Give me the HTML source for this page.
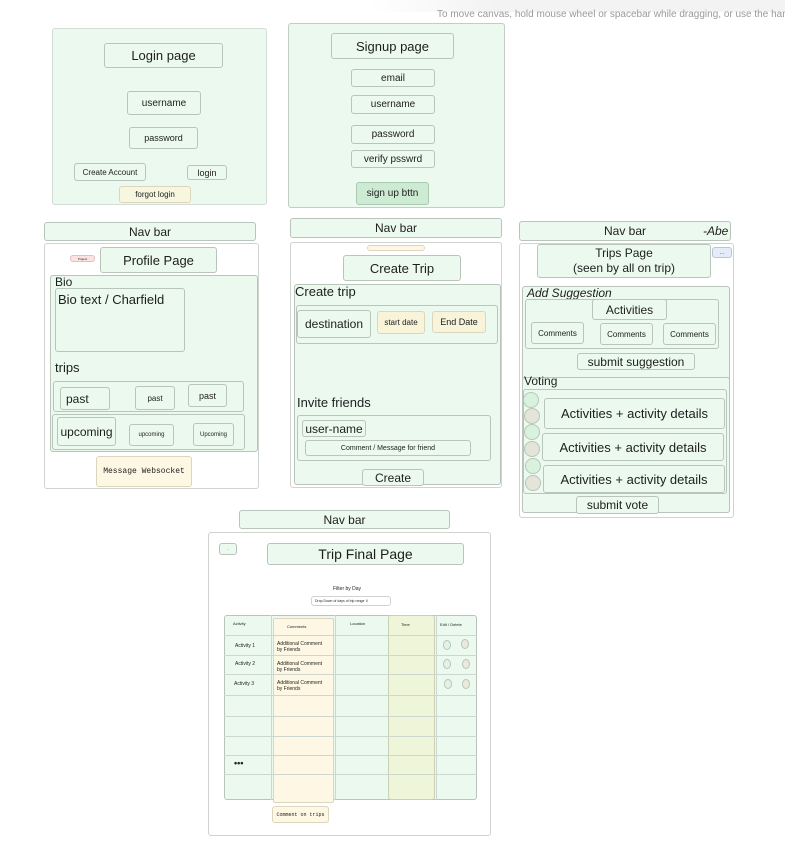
<!DOCTYPE html>
<html><head><meta charset="utf-8"><style>
*{margin:0;padding:0;box-sizing:border-box}
body{width:785px;height:863px;background:#fff;position:relative;overflow:hidden;font-family:"Liberation Sans",sans-serif;color:#1e1e1e}
.b{position:absolute;border:1px solid #b9c4bb;border-radius:3px;background:#ebf9ee;display:flex;align-items:center;justify-content:center;text-align:center;white-space:nowrap}
.w{background:#fff;border-color:#cfd4d0}
.y{background:#fdf7e3;border-color:#dcd6bf}
.t{position:absolute;white-space:nowrap}
.c{position:absolute;border-radius:50%;border:1px solid #b9c4bb}
.hl{position:absolute;height:1px;background:#cdd6cf}
</style></head><body>
<div style="position:absolute;left:370px;top:0;width:415px;height:12px;background:linear-gradient(90deg,#fff,#f3f3f3 30%)"></div>
<div class="t" style="left:437px;top:9px;font-size:10px;color:#9a9a9a">To move canvas, hold mouse wheel or spacebar while dragging, or use the hand</div>

<!-- Login -->
<div class="b" style="left:52px;top:28px;width:215px;height:177px;border-color:#d3dcd5"></div>
<div class="b" style="left:104px;top:43px;width:119px;height:25px;font-size:13px">Login page</div>
<div class="b" style="left:127px;top:91px;width:74px;height:24px;font-size:10px">username</div>
<div class="b" style="left:129px;top:127px;width:69px;height:22px;font-size:9px">password</div>
<div class="b" style="left:74px;top:163px;width:72px;height:18px;font-size:8px">Create Account</div>
<div class="b" style="left:187px;top:165px;width:40px;height:15px;font-size:9px">login</div>
<div class="b y" style="left:119px;top:186px;width:72px;height:17px;font-size:8px;background:#f7f6df">forgot login</div>

<!-- Signup -->
<div class="b" style="left:288px;top:23px;width:217px;height:185px;border-color:#c3ccc5"></div>
<div class="b" style="left:331px;top:33px;width:123px;height:26px;font-size:13px">Signup page</div>
<div class="b" style="left:351px;top:69px;width:84px;height:18px;font-size:10px">email</div>
<div class="b" style="left:351px;top:95px;width:84px;height:19px;font-size:10px">username</div>
<div class="b" style="left:351px;top:125px;width:84px;height:19px;font-size:10px">password</div>
<div class="b" style="left:351px;top:150px;width:84px;height:18px;font-size:10px">verify psswrd</div>
<div class="b" style="left:356px;top:182px;width:73px;height:23px;font-size:10px;background:#cdebd3;border-color:#a9c9b0">sign up bttn</div>

<!-- Profile -->
<div class="b" style="left:44px;top:222px;width:212px;height:19px;font-size:12px">Nav bar</div>
<div class="b w" style="left:44px;top:243px;width:215px;height:246px"></div>
<div class="b" style="left:70px;top:255px;width:25px;height:7px;background:#fbe3e3;border-color:#e3c0c0;font-size:3px">Project</div>
<div class="b" style="left:100px;top:247px;width:117px;height:26px;font-size:13px">Profile Page</div>
<div class="b" style="left:50px;top:275px;width:208px;height:177px"></div>
<div class="t" style="left:55px;top:275px;font-size:12px">Bio</div>
<div class="b" style="left:55px;top:288px;width:130px;height:64px;align-items:flex-start;justify-content:flex-start;font-size:13px;padding-left:2px;padding-top:3px">Bio text / Charfield</div>
<div class="t" style="left:55px;top:360px;font-size:13px">trips</div>
<div class="b" style="left:53px;top:381px;width:191px;height:31px"></div>
<div class="b" style="left:60px;top:387px;width:50px;height:23px;font-size:12px;justify-content:flex-start;padding-left:5px">past</div>
<div class="b" style="left:135px;top:386px;width:40px;height:24px;font-size:8px">past</div>
<div class="b" style="left:188px;top:384px;width:39px;height:23px;font-size:9px">past</div>
<div class="b" style="left:52px;top:414px;width:193px;height:36px"></div>
<div class="b" style="left:57px;top:417px;width:59px;height:29px;font-size:12px">upcoming</div>
<div class="b" style="left:129px;top:424px;width:45px;height:22px;font-size:6px">upcoming</div>
<div class="b" style="left:193px;top:423px;width:41px;height:23px;font-size:6px">Upcoming</div>
<div class="b y" style="left:96px;top:456px;width:96px;height:31px;font-size:8px;font-family:'Liberation Mono',monospace">Message Websocket</div>

<!-- Create Trip -->
<div class="b" style="left:290px;top:218px;width:212px;height:20px;font-size:12px">Nav bar</div>
<div class="b w" style="left:290px;top:242px;width:212px;height:246px"></div>
<div class="b y" style="left:367px;top:245px;width:58px;height:6px"></div>
<div class="b" style="left:343px;top:255px;width:118px;height:26px;font-size:13px">Create Trip</div>
<div class="b" style="left:294px;top:284px;width:207px;height:201px"></div>
<div class="t" style="left:295px;top:284px;font-size:13px">Create trip</div>
<div class="b" style="left:296px;top:305px;width:202px;height:39px"></div>
<div class="b" style="left:297px;top:310px;width:74px;height:28px;font-size:12px">destination</div>
<div class="b y" style="left:377px;top:311px;width:48px;height:23px;font-size:8px;background:#f7f4d9">start date</div>
<div class="b y" style="left:432px;top:311px;width:54px;height:22px;font-size:9px;background:#f7f4d9">End Date</div>
<div class="t" style="left:297px;top:395px;font-size:13px">Invite friends</div>
<div class="b" style="left:297px;top:415px;width:194px;height:46px"></div>
<div class="b" style="left:302px;top:420px;width:64px;height:17px;font-size:12px">user-name</div>
<div class="b" style="left:305px;top:440px;width:166px;height:16px;font-size:7px">Comment / Message for friend</div>
<div class="b" style="left:362px;top:469px;width:62px;height:17px;font-size:12px">Create</div>

<!-- Trips page -->
<div class="b" style="left:519px;top:221px;width:212px;height:20px;font-size:12px">Nav bar</div>
<div class="t" style="left:703px;top:224px;font-size:12px;font-style:italic">-Abe</div>
<div class="b w" style="left:519px;top:243px;width:215px;height:275px"></div>
<div class="b" style="left:537px;top:244px;width:174px;height:34px;font-size:12px;line-height:15px;white-space:normal">Trips Page<br>(seen by all on trip)</div>
<div class="b" style="left:712px;top:247px;width:20px;height:11px;background:#e3ecf8;border-color:#b9c4d4;font-size:5px">...</div>
<div class="b" style="left:522px;top:286px;width:208px;height:227px"></div>
<div class="t" style="left:527px;top:286px;font-size:12px;font-style:italic">Add Suggestion</div>
<div class="b" style="left:525px;top:299px;width:194px;height:50px"></div>
<div class="b" style="left:592px;top:299px;width:75px;height:21px;font-size:12px">Activities</div>
<div class="b" style="left:531px;top:322px;width:53px;height:22px;font-size:8px">Comments</div>
<div class="b" style="left:600px;top:323px;width:53px;height:22px;font-size:8px">Comments</div>
<div class="b" style="left:663px;top:323px;width:53px;height:22px;font-size:8px">Comments</div>
<div class="b" style="left:577px;top:353px;width:118px;height:17px;font-size:12px">submit suggestion</div>
<div class="b" style="left:522px;top:377px;width:208px;height:136px"></div>
<div class="t" style="left:524px;top:374px;font-size:12px">Voting</div>
<div class="b" style="left:523px;top:389px;width:204px;height:105px"></div>
<div class="c" style="left:523px;top:392px;width:16px;height:16px;background:#d8f2de"></div>
<div class="c" style="left:524px;top:408px;width:16px;height:16px;background:#e4e4d8"></div>
<div class="c" style="left:524px;top:424px;width:16px;height:16px;background:#d8f2de"></div>
<div class="c" style="left:524px;top:441px;width:16px;height:16px;background:#e4e4d8"></div>
<div class="c" style="left:525px;top:458px;width:16px;height:16px;background:#d8f2de"></div>
<div class="c" style="left:525px;top:475px;width:16px;height:16px;background:#e4e4d8"></div>
<div class="b" style="left:544px;top:398px;width:181px;height:31px;font-size:13px">Activities + activity details</div>
<div class="b" style="left:542px;top:433px;width:182px;height:28px;font-size:13px">Activities + activity details</div>
<div class="b" style="left:543px;top:465px;width:182px;height:28px;font-size:13px">Activities + activity details</div>
<div class="b" style="left:576px;top:496px;width:83px;height:18px;font-size:12px">submit vote</div>

<!-- Trip Final -->
<div class="b" style="left:239px;top:510px;width:211px;height:19px;font-size:12px">Nav bar</div>
<div class="b w" style="left:208px;top:532px;width:283px;height:304px"></div>
<div class="b" style="left:219px;top:543px;width:18px;height:12px;font-size:3px">...</div>
<div class="b" style="left:267px;top:543px;width:197px;height:22px;font-size:14px">Trip Final Page</div>
<div class="t" style="left:333px;top:586px;font-size:5px">Filter by Day</div>
<div class="b w" style="left:311px;top:596px;width:80px;height:10px;font-size:3.5px;justify-content:flex-start;padding-left:3px">Drop Down of days of trip range ⇕</div>
<div class="b" style="left:224px;top:615px;width:253px;height:185px"></div>
<div class="b y" style="left:273px;top:618px;width:61px;height:185px;border-radius:2px"></div>
<div class="b" style="left:388px;top:615px;width:47px;height:185px;background:#eef5d8;border-color:#c9d0b4"></div>
<div style="position:absolute;left:271px;top:615px;width:1px;height:185px;background:#cdd6cf"></div>
<div style="position:absolute;left:335px;top:615px;width:1px;height:185px;background:#cdd6cf"></div>
<div style="position:absolute;left:436px;top:615px;width:1px;height:185px;background:#cdd6cf"></div>
<div class="hl" style="left:224px;top:635px;width:253px"></div>
<div class="hl" style="left:224px;top:655px;width:253px"></div>
<div class="hl" style="left:224px;top:674px;width:253px"></div>
<div class="hl" style="left:224px;top:695px;width:253px"></div>
<div class="hl" style="left:224px;top:716px;width:253px"></div>
<div class="hl" style="left:224px;top:736px;width:253px"></div>
<div class="hl" style="left:224px;top:755px;width:253px"></div>
<div class="hl" style="left:224px;top:774px;width:253px"></div>
<div class="t" style="left:233px;top:621px;font-size:4px">Activity</div>
<div class="t" style="left:287px;top:624px;font-size:4px">Comments</div>
<div class="t" style="left:350px;top:621px;font-size:4px">Location</div>
<div class="t" style="left:401px;top:622px;font-size:4px">Time</div>
<div class="t" style="left:440px;top:622px;font-size:4px">Edit / Delete</div>
<div class="t" style="left:235px;top:643px;font-size:5px">Activity 1</div>
<div class="t" style="left:235px;top:661px;font-size:5px">Activity 2</div>
<div class="t" style="left:234px;top:681px;font-size:5px">Activity 3</div>
<div class="t" style="left:277px;top:641px;font-size:5px;line-height:6px">Additional Comment<br>by Friends</div>
<div class="t" style="left:277px;top:661px;font-size:5px;line-height:6px">Additional Comment<br>by Friends</div>
<div class="t" style="left:277px;top:680px;font-size:5px;line-height:6px">Additional Comment<br>by Friends</div>
<div class="c" style="left:443px;top:640px;width:8px;height:10px;background:#e0f4e4"></div>
<div class="c" style="left:461px;top:639px;width:8px;height:10px;background:#ebe9dc"></div>
<div class="c" style="left:443px;top:659px;width:8px;height:10px;background:#e0f4e4"></div>
<div class="c" style="left:462px;top:659px;width:8px;height:10px;background:#ebe9dc"></div>
<div class="c" style="left:444px;top:679px;width:8px;height:10px;background:#e0f4e4"></div>
<div class="c" style="left:462px;top:679px;width:8px;height:10px;background:#ebe9dc"></div>
<div class="t" style="left:234px;top:758px;font-size:9px;font-weight:bold">•••</div>
<div class="b y" style="left:272px;top:806px;width:57px;height:17px;font-size:5px;font-family:'Liberation Mono',monospace">Comment on trips</div>
</body></html>
